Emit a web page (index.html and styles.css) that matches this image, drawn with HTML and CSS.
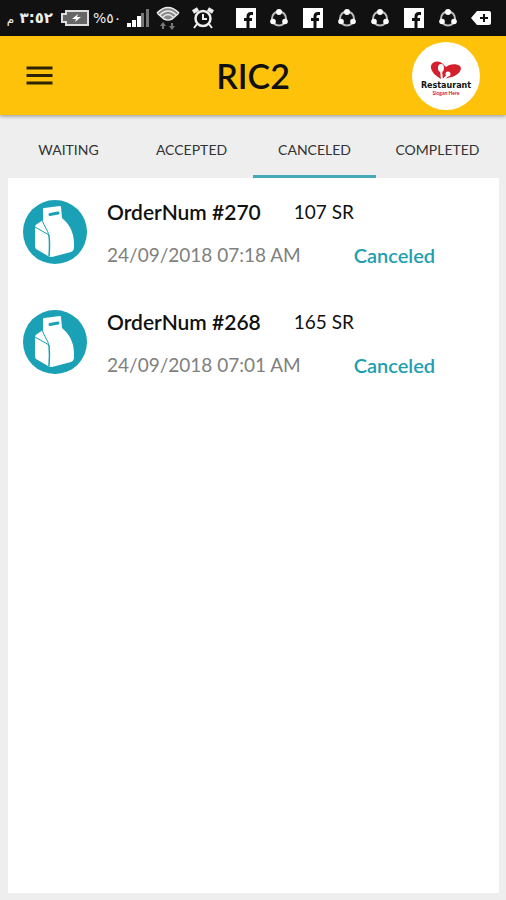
FILE: index.html
```html
<!DOCTYPE html>
<html lang="en">
<head>
<meta charset="utf-8">
<meta name="viewport" content="width=device-width, initial-scale=1">
<title>RIC2</title>
<link rel="stylesheet" href="styles.css">
</head>
<body>
<svg class="sprite" aria-hidden="true">
  <symbol id="facebook" viewBox="0 0 20 20">
    <path fill="#fff" d="M0 0h20v20H0z"/>
    <path fill="none" stroke="#111" stroke-width="3" d="M17 5.500h-2q-3 0-3 3V20M8 11.500h8"/>
  </symbol>
  <symbol id="share" viewBox="0 0 20 20">
    <circle cx="10" cy="10.500" r="7" fill="none" stroke="#bbb" stroke-width="2"/>
    <circle cx="10" cy="4" r="3" fill="#fff"/>
    <circle cx="4" cy="13.500" r="2.800" fill="#fff"/>
    <circle cx="16" cy="13.500" r="2.800" fill="#fff"/>
  </symbol>
  <symbol id="bag" viewBox="0 0 64 64">
    <circle cx="32" cy="32" r="32" fill="#1aa1b5"/>
    <path fill="#fff" d="M20 9q0-1 1-1l16-2q1 0 1 1l1 11c6 5 9 10 11 17 1 5 1 8 1 12 0 3-1 4-3 5l-19 5q-2 0-4-1L13 49q-1-1-1-3V27q0-2 2-3l6-4z"/>
    <path fill="none" stroke="#1aa1b5" stroke-width="3" stroke-linecap="round" d="M27 14.500l8-1.500"/>
    <path fill="none" stroke="#1aa1b5" stroke-width="1" d="M19 20c2 6 6 10 7 16M12 27l14 8"/>
    <path fill="none" stroke="#1aa1b5" stroke-width="1.500" d="M26 35q1 10 0 21"/>
  </symbol>
</svg>

<div class="status">
  <div class="system">
    <span class="clock" dir="rtl">٣:٥٢ <small>م</small></span>
    <svg class="battery" viewBox="0 0 28 16" aria-hidden="true">
      <path fill="#666" stroke="#ddd" stroke-width="2" d="M5 1h22v14H5v-3H1V4h4z"/>
      <path fill="#fff" d="M17 4l-6 5h4l-1 3 6-5h-4z"/>
    </svg>
    <span class="percent"><span>%</span><span>٥٠</span></span>
    <svg class="signal" viewBox="0 0 22 18" aria-hidden="true">
      <path fill="#fff" d="M0 14h4v4H0zM5 11h4v7H5zM10 7h4v11h-4z"/>
      <path fill="#777" d="M14 4h3v14h-3zM19 0h3v18h-3z"/>
    </svg>
    <svg class="wifi" viewBox="0 0 24 24" aria-hidden="true">
      <path fill="#888" d="M1 7Q12-4 23 7L16 13H8z"/>
      <path fill="none" stroke="#eee" stroke-width="1.500" d="M1 7q11-11 22 0M4 9q8-8 16 0M7 11q5-5 10 0M1 7l7 6q4 2 8 0l7-6"/>
      <path fill="#777" d="M4 20l3-4 3 4H8v3H6v-3zM13 20h2v-3h2v3h2l-3 4z"/>
    </svg>
    <svg class="alarm" viewBox="0 0 22 22" aria-hidden="true">
      <circle cx="11" cy="11.500" r="7.500" fill="none" stroke="#eee" stroke-width="2.500"/>
      <path fill="none" stroke="#eee" stroke-width="2" d="M11 7v5h4M5 17l-3 4M17 17l3 4"/>
      <path fill="none" stroke="#eee" stroke-width="4" d="M1 5l5-3M21 5l-5-3"/>
    </svg>
  </div>
  <div class="notices" aria-hidden="true">
    <svg><use href="#facebook"/></svg>
    <svg><use href="#share"/></svg>
    <svg><use href="#facebook"/></svg>
    <svg><use href="#share"/></svg>
    <svg><use href="#share"/></svg>
    <svg><use href="#facebook"/></svg>
    <svg><use href="#share"/></svg>
    <svg viewBox="0 0 20 20"><path fill="#fff" d="M0 10l6-7h12q2 0 2 2v10q0 2-2 2H6z"/><path stroke="#111" stroke-width="2" d="M9 10h8M13 6v8"/></svg>
  </div>
</div>

<header class="bar">
  <button class="menu" type="button" aria-label="Menu">
    <svg viewBox="0 0 26 20" aria-hidden="true"><path stroke="#2e2405" stroke-width="3" d="M0 2h26M0 9.500h26M0 17h26"/></svg>
  </button>
  <h1>RIC2</h1>
  <a class="brand" href="#" aria-label="Restaurant">
    <svg class="heart" viewBox="0 0 32 20" aria-hidden="true">
      <path fill="#d3202c" d="M13 19C6 16 0 10 1 5 2 0 9-1 13 3l3 3c3-3 10-4 14-1 3 4-2 9-8 11-4 1-7 1-9 3z"/>
      <path stroke="#fff" stroke-width="2" fill="none" d="M11 9l1 10M18 14l-5 5"/>
      <ellipse cx="11" cy="7" rx="3" ry="4" fill="#fff"/>
      <circle cx="18" cy="13" r="2.500" fill="#fff"/>
    </svg>
    <span class="brand-name">Restaurant</span>
    <span class="brand-line">Slogan Here</span>
  </a>
</header>

<nav class="tabs">
  <a href="#">WAITING</a>
  <a href="#">ACCEPTED</a>
  <a href="#" class="active" aria-current="page">CANCELED</a>
  <a href="#">COMPLETED</a>
</nav>

<main class="orders">
  <article class="order">
    <svg class="bag" aria-hidden="true"><use href="#bag"/></svg>
    <div class="details">
      <div class="line"><h2>OrderNum #270</h2><span class="price">107 SR</span></div>
      <div class="line meta"><time>24/09/2018 07:18 AM</time><span class="state">Canceled</span></div>
    </div>
  </article>
  <article class="order">
    <svg class="bag" aria-hidden="true"><use href="#bag"/></svg>
    <div class="details">
      <div class="line"><h2>OrderNum #268</h2><span class="price">165 SR</span></div>
      <div class="line meta"><time>24/09/2018 07:01 AM</time><span class="state">Canceled</span></div>
    </div>
  </article>
</main>
</body>
</html>
```
FILE: styles.css
```css
* {
  box-sizing: border-box;
}

body {
  margin: 0;
  min-height: 100vh;
  display: flex;
  flex-direction: column;
  background: #eee;
  color: #111;
  font-family: Lato, "Liberation Sans", sans-serif;
}

svg {
  display: block;
}

a {
  color: inherit;
  text-decoration: none;
}

.sprite {
  display: none;
}

.status {
  display: flex;
  height: 36px;
  padding: 0 8px 0 11px;
  background: #111;
  color: #eee;
}

.system {
  display: flex;
  align-items: center;
  margin-right: 15px;
}

.clock,
.percent {
  font-family: "DejaVu Sans", sans-serif;
  font-size: 15px;
  font-weight: 700;
  line-height: 20px;
  white-space: nowrap;
}

.clock {
  width: 42px;
  margin-right: 8px;
}

.clock small {
  font-size: 12px;
  font-weight: 400;
}

.percent {
  display: flex;
  width: 28px;
  margin: 0 6px 0 4px;
  font-size: 14px;
  font-weight: 400;
}

.battery {
  width: 28px;
  height: 16px;
}

.signal {
  width: 22px;
  height: 18px;
  margin-right: 7px;
}

.wifi {
  width: 24px;
  height: 24px;
  margin-right: 12px;
}

.alarm {
  width: 22px;
  height: 22px;
}

.notices {
  flex: 1;
  display: grid;
  grid-template-columns: repeat(8, 1fr);
  place-items: center;
}

.notices svg {
  width: 20px;
  height: 20px;
}

.bar {
  display: grid;
  grid-template-columns: 1fr auto 1fr;
  align-items: center;
  height: 79px;
  padding: 0 26px;
  background: #fec20a;
  box-shadow: 0 1px 4px rgba(0, 0, 0, 0.4);
}

.menu {
  justify-self: start;
  padding: 0;
  border: 0;
  background: none;
}

.menu svg {
  width: 27px;
  height: 20px;
}

.bar h1 {
  margin: 0;
  font-size: 34px;
  font-weight: 600;
  line-height: 40px;
}

.brand {
  justify-self: end;
  display: flex;
  flex-direction: column;
  align-items: center;
  width: 68px;
  height: 68px;
  padding-top: 19px;
  border-radius: 50%;
  background: #fff;
}

.heart {
  width: 32px;
  height: 20px;
}

.brand-name {
  font: 700 8px/9px "DejaVu Sans", sans-serif;
}

.brand-line {
  color: #d3202c;
  font: 700 5px/7px Lato, sans-serif;
}

.tabs {
  display: grid;
  grid-template-columns: repeat(4, 1fr);
  margin: 0 7px;
}

.tabs a {
  height: 63px;
  padding-top: 25px;
  border-bottom: 3px solid transparent;
  color: #333;
  font-size: 14px;
  line-height: 20px;
  text-align: center;
}

.tabs .active {
  border-color: #45a9b8;
}

.orders {
  flex: 1;
  margin: 0 7px 7px 8px;
  background: #fff;
}

.order {
  display: flex;
  gap: 20px;
  height: 110px;
  padding: 22px 15px 0;
}

.bag {
  flex: none;
  width: 64px;
  height: 64px;
}

.line {
  display: flex;
  gap: 33px;
  line-height: 24px;
  font-size: 19px;
  white-space: nowrap;
}

.line h2 {
  margin: 0;
  font-size: 21px;
  font-weight: 600;
}

.meta {
  gap: 53px;
  margin-top: 19px;
}

.meta time {
  color: #808080;
}

.state {
  color: #1e9fb0;
  font-size: 20px;
  font-weight: 600;
}
```
